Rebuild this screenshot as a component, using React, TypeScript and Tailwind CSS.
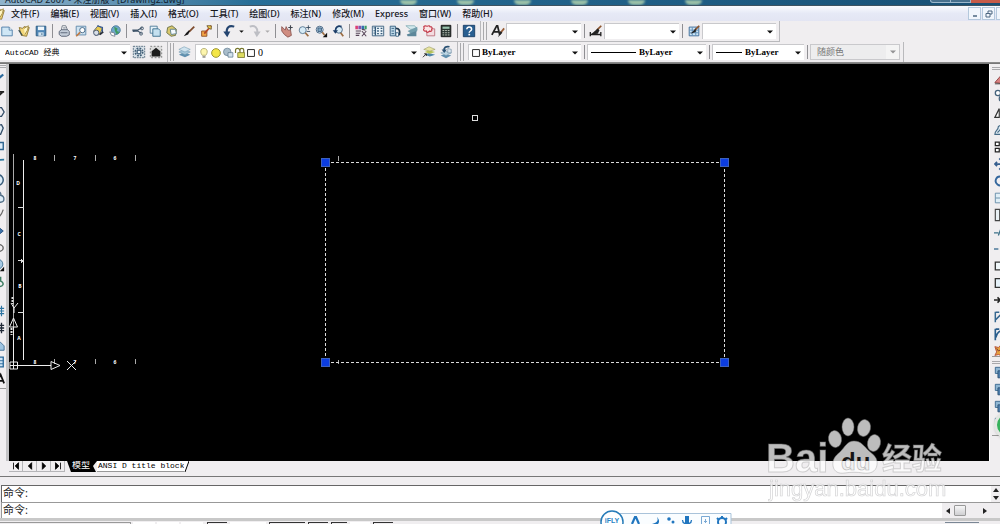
import React from "react";

const icons: Record<string, React.ReactNode> = {
  sheet: (
    <>
      <path d="M2 3.5h8.5L14 7v6.500H2z" fill="#cfe6f5" stroke="#4a7aa5" />
      <path d="M10.500 3.500V7H14" fill="#fff" stroke="#4a7aa5" />
    </>
  ),
  open: (
    <>
      <path d="M2.500 4l4 1 1.500-2 6 1-3 10-6-1z" fill="#f3d77a" stroke="#8b7430" />
      <path d="M8 5l5-3-1 5-3 5" fill="#fff6c5" stroke="#9d8640" />
      <path d="M2 7l4 6" stroke="#3b4e4f" strokeWidth="1.500" />
    </>
  ),
  save: (
    <>
      <path d="M2.500 2.500h11v11h-11z" fill="#4f86b5" stroke="#28587f" />
      <path d="M4.500 3h7v4h-7z" fill="#eef6fb" />
      <path d="M5 9.500h6v4H5z" fill="#d4e4ef" />
      <path d="M9 10.500v2" stroke="#28587f" />
    </>
  ),
  print: (
    <>
      <path d="M5 7l1-5h4l2 5" fill="#fff" stroke="#67707d" />
      <path d="M2.500 8.500L5 6.500h7l2 2v4l-3 1.500H5l-2.500-2z" fill="#c3ccd8" stroke="#525e70" />
      <path d="M4 10h8M7 4.500h3" stroke="#525e70" />
    </>
  ),
  preview: (
    <>
      <path d="M2.500 2.500h11v10h-11z" fill="#cfe3f1" stroke="#5c86a8" />
      <circle cx="9.500" cy="7" r="3" fill="#fff" stroke="#3d6080" />
      <path d="M7 9.500l-4.500 4.500" stroke="#c07a45" strokeWidth="2" />
    </>
  ),
  publish: (
    <>
      <path d="M3 8l5-6 5 3-3 7-5 1z" fill="#e9c94f" stroke="#53627a" />
      <path d="M7 2l6 2v5" fill="none" stroke="#3a5c90" strokeWidth="1.500" />
      <circle cx="6" cy="10" r="3" fill="#d9dfe8" stroke="#40506a" />
      <path d="M10 12l4-3" stroke="#292f3b" strokeWidth="2" />
    </>
  ),
  globe: (
    <>
      <circle cx="9" cy="7" r="5" fill="#6fa8c9" stroke="#48779a" />
      <path d="M7 3l4 2-1 3 3 1-3 3-2-4z" fill="#3e9a5e" />
      <path d="M2 9l5 1 1 4-4-1z" fill="#fff" stroke="#738090" />
    </>
  ),
  cut: (
    <>
      <path d="M1.500 7h6L13 4M2 8.500l6-.5 4 3" fill="none" stroke="#3e5368" strokeWidth="1.300" />
      <circle cx="12.500" cy="5" r="1.700" fill="none" stroke="#3e5368" />
      <circle cx="11.500" cy="11" r="1.700" fill="none" stroke="#3e5368" />
    </>
  ),
  copy: (
    <>
      <path d="M2.500 2.500h8v8h-8z" fill="#e5f2f9" stroke="#4a7896" />
      <path d="M5.500 5.500h6.500l2 2v6.500H5.500z" fill="#c4e0ef" stroke="#356989" />
    </>
  ),
  paste: (
    <>
      <path d="M3 4l5-2 5 4-1 7-5 1-5-4z" fill="#dac86c" stroke="#656d43" />
      <path d="M6 6h6l1 5-6 1z" fill="#f5fbff" stroke="#577b8d" />
    </>
  ),
  brush: (
    <>
      <path d="M14 3l-6 6" stroke="#7e4b2e" strokeWidth="2" />
      <path d="M9 8l-2 4-5 2 3-4 3-3z" fill="#171717" />
    </>
  ),
  match: (
    <>
      <path d="M3 8h6v6H3z" fill="#f3a645" stroke="#8d4e26" />
      <path d="M14 2L6 11" stroke="#b24727" strokeWidth="2" />
      <path d="M9 2h5v4l-3-1z" fill="#f2cf49" stroke="#6c5331" />
    </>
  ),
  undo: (
    <>
      <path d="M14 3C8 1 4.500 4 5.500 11" fill="none" stroke="#24446f" strokeWidth="2.400" />
      <path d="M1.500 8.500h8L6 15z" fill="#24446f" />
    </>
  ),
  redo: (
    <>
      <path d="M2 3c6-2 9.500 1 8.500 8" fill="none" stroke="#bdbec4" strokeWidth="2.200" />
      <path d="M6.500 8.500h8L10 15z" fill="#bdbec4" />
    </>
  ),
  pan: (
    <>
      <path d="M2 3l4 4 1-4 2 4 3 0 1 6-4 2-4-3-3-4z" fill="#d08d81" stroke="#8a5550" />
      <path d="M12 1.500v5M9.500 4h5" stroke="#41464f" strokeWidth="1.300" />
    </>
  ),
  zoomRt: (
    <>
      <circle cx="6.500" cy="7" r="4" fill="#d7ebf6" stroke="#53748f" />
      <path d="M9.500 10l3.500 4" stroke="#9b6c42" strokeWidth="2" />
      <path d="M13 1.500v5M10.500 4h5M11 8.500h4" stroke="#34485c" />
    </>
  ),
  zoomWin: (
    <>
      <circle cx="6.500" cy="6.500" r="4" fill="#d7ebf6" stroke="#405f7e" />
      <path d="M4.500 4.500h4v4h-4z" fill="#7fa8c5" stroke="#385777" />
      <path d="M9.500 9.500l2.500 3" stroke="#9b6c42" strokeWidth="2" />
      <path d="M15 10v5h-5z" fill="#111" />
    </>
  ),
  zoomPrev: (
    <>
      <circle cx="9" cy="6.500" r="4" fill="#d7ebf6" stroke="#405f7e" />
      <path d="M11 10l3 4" stroke="#9b6c42" strokeWidth="2" />
      <path d="M12 3C8 1 5 4 5 8" fill="none" stroke="#1d3e69" strokeWidth="2" />
      <path d="M2 7h6l-3 4z" fill="#1d3e69" />
    </>
  ),
  props: (
    <>
      <path d="M1.500 2h3v4h-3z" fill="#db3f76" />
      <path d="M5 2h3v4H5z" fill="#8750ad" />
      <path d="M8.500 2h3v4h-3z" fill="#346fae" />
      <path d="M12 2h2.500v4H12z" fill="#3c9d69" />
      <path d="M2 8h6M2 10.500h5M2 13h4M9 8l5 6M14 8l-5 6M9 6l4 1" stroke="#564457" strokeWidth="1.200" />
    </>
  ),
  design: (
    <>
      <path d="M1.500 2.500h13v11h-13z" fill="#e8f1f7" stroke="#355a7a" />
      <path d="M5 3v10M3 4.500h1M3 7.500h1M3 10.500h1M7 5h2M11 5h2M7 8h2M11 8h2M7 11h2M11 11h2" stroke="#355a7a" strokeWidth="1.500" />
    </>
  ),
  palette: (
    <>
      <path d="M2.500 2.500h6v11h-6z" fill="#bed8e9" stroke="#315c7d" />
      <path d="M4 5h3M4 8h3M4 11h3" stroke="#315c7d" />
      <path d="M9 5c4 0 5 3 4 8" stroke="#213a50" strokeWidth="2" fill="none" />
      <path d="M9 10h3v4H9z" fill="#fff" stroke="#315c7d" />
    </>
  ),
  sheets: (
    <>
      <path d="M1 2h10l3 4H6z" fill="#d2e9ed" stroke="#8cb1b9" />
      <path d="M3 8l11-5v5l-6 4z" fill="#729eac" />
      <path d="M2 12l11-4v6H3z" fill="#5d879a" />
    </>
  ),
  markup: (
    <>
      <path d="M5.500 5.500h9v8h-9z" fill="#f4dce0" stroke="#bc6e79" />
      <path d="M2 3c2-2 3 0 4-.5s3-1 3 .5c3 0 3 2 2 3 1 2-1 3-2 2-2 2-4 2-4 0-3 1-4-2-2.500-3z" fill="#fbe5e6" stroke="#c33948" strokeWidth="1.300" />
    </>
  ),
  calc: (
    <>
      <path d="M2.500 1.500h11v13h-11z" fill="#26332f" stroke="#111" />
      <path d="M4 3h8v2.500H4z" fill="#99c3ae" />
      <path d="M4 7.500h8M4 10h8M4 12.500h8" stroke="#d4d8ce" strokeDasharray="2 1" />
    </>
  ),
  help: (
    <>
      <path d="M1.500 1.500h13v13h-13z" fill="#295f91" stroke="#153a62" />
      <path d="M5.500 6c0-3.500 5.500-3 5.500 0 0 2-2.800 2-2.800 4" fill="none" stroke="#fff" strokeWidth="1.700" />
      <path d="M7.300 11.200h2v1.800h-2z" fill="#fff" />
    </>
  ),
  textStyle: (
    <>
      <path d="M1 12.500L6.500 2h1l2.500 10.500M3.500 9h6" fill="none" stroke="#222" strokeWidth="2" />
      <path d="M15 5l-4 5" stroke="#985c35" strokeWidth="2" />
      <path d="M11 8l2 2-5 5z" fill="#222" />
    </>
  ),
  dimStyle: (
    <>
      <path d="M1 12h13M1.500 9v5M13.500 9v5" stroke="#222" strokeWidth="1.500" />
      <path d="M14 2L9 7" stroke="#8d552f" strokeWidth="2" />
      <path d="M10 5L2 12l8-1 2-4z" fill="#222" />
    </>
  ),
  tableStyle: (
    <>
      <path d="M2.500 3.500h11v10h-11z" fill="#cde5f5" stroke="#326392" />
      <path d="M3 7h10M3 10h10M6 4v9M10 4v9" stroke="#5788b3" />
      <path d="M14 2L9 7" stroke="#8d552f" strokeWidth="2" />
      <path d="M10 5L4 11l6-2z" fill="#222" />
    </>
  ),
  gear: (
    <>
      <path d="M1.500 1.500h13v13h-13z" fill="#d7e0e7" stroke="#4e6578" strokeDasharray="2 1" />
      <circle cx="8" cy="8" r="4.200" fill="none" stroke="#405e77" strokeWidth="2" strokeDasharray="2 1.300" />
      <circle cx="8" cy="8" r="2.200" fill="#eef5fa" stroke="#405e77" strokeWidth="1.300" />
    </>
  ),
  home: (
    <>
      <path d="M1.500 1.500h13v13h-13z" fill="#ddd" stroke="#777" strokeDasharray="2 2" />
      <path d="M3 7l5-4 5 4v6H3z" fill="#1d1d1d" />
    </>
  ),
  layers: (
    <>
      <path d="M1 11l6-3 7 3-6 3z" fill="#608fae" />
      <path d="M1 8l6-3 7 3-6 3z" fill="#a4c5d8" stroke="#6994ad" strokeWidth=".6" />
      <path d="M1 5l6-3 7 3-6 3z" fill="#d0e3ee" stroke="#6994ad" strokeWidth=".6" />
    </>
  ),
  layerCur: (
    <>
      <path d="M3 11l5-2 7 2-6 2z" fill="#4f86a8" />
      <path d="M3 8l5-2 7 2-6 2z" fill="#b6c457" />
      <path d="M2 5l6-3 7 3-6 2z" fill="#e8e4a1" stroke="#8d9056" strokeWidth=".6" />
      <path d="M1 14l4-4M2.500 10H5v2.500" stroke="#222" fill="none" />
    </>
  ),
  layerPrev: (
    <>
      <path d="M2 12l5-2 7 2-6 3z" fill="#608fae" />
      <path d="M2 9l5-2 7 2-6 3z" fill="#bcd5e3" stroke="#6994ad" strokeWidth=".6" />
      <path d="M12 2C8 1 5 3 6 7" stroke="#2b5274" strokeWidth="2" fill="none" />
      <path d="M3 5h6l-3 4z" fill="#2b5274" />
      <path d="M10 4l4 1v4h-4z" fill="#d8e6ef" stroke="#54758d" strokeWidth=".6" />
    </>
  ),
  bulb: (
    <>
      <path d="M5.500 11C3 8 2.500 2 8 2s5 6 2.500 9z" fill="#fdf6ae" stroke="#a49d5d" />
      <path d="M6 12h4v2.500H6z" fill="#9e9e98" />
    </>
  ),
  sun: <circle cx="8" cy="8" r="5.800" fill="#f4e647" stroke="#9a9332" strokeWidth="1.300" />,
  sunFrame: (
    <>
      <circle cx="7" cy="6.500" r="5" fill="#a9bdcb" stroke="#667f92" />
      <path d="M8 7.500h6.500v6H8z" fill="#d4e3ed" stroke="#5e798e" />
    </>
  ),
  lock: (
    <>
      <path d="M2 8V4.500C2 1 7.500 1 7.500 4.500M8 8V4c0-3 5-3 5 0v4" fill="none" stroke="#76762c" strokeWidth="1.600" />
      <path d="M5 7.500h9v6.500H5z" fill="#dddc61" stroke="#73732b" />
    </>
  ),
  swatch: <path d="M2.500 2.500h11v11h-11z" fill="#fff" stroke="#222" strokeWidth="1.500" />,
  line: <path d="M2 14L14 4" stroke="#2b6a9c" strokeWidth="2.500" />,
  ray: <path d="M3 14L13 5M10 4.500h5" stroke="#222" strokeWidth="2" />,
  poly: <path d="M4 3h8l3 5-3 5H4" fill="none" stroke="#36506a" strokeWidth="1.500" />,
  pentagon: <path d="M3 4l9-1 2 4-3 7H4z" fill="#e3eef5" stroke="#36506a" strokeWidth="1.500" />,
  rect: <path d="M2 4h12v8H2z" fill="#dfeefa" stroke="#2e658f" strokeWidth="1.600" />,
  arc: <path d="M2 13C4 5 8 4 15 4" fill="none" stroke="#2e789e" strokeWidth="2" />,
  circle: <circle cx="8" cy="8" r="6" fill="#deedf8" stroke="#375c7a" strokeWidth="1.700" />,
  cloud: <path d="M4 2c5-2 8 1 7 4 5 1 5 8 0 8H3" fill="#deedf8" stroke="#526f87" strokeWidth="1.500" />,
  spline: <path d="M2 3c2 10 8 12 12 0" fill="none" stroke="#666" strokeWidth="1.500" />,
  diamond: <path d="M8 3l6 5-6 5z" fill="#3f75aa" stroke="#234b7d" />,
  ring: <ellipse cx="8" cy="8" rx="6" ry="4" fill="none" stroke="#666" strokeWidth="1.500" />,
  block: (
    <>
      <circle cx="8" cy="7" r="5.500" fill="#a7cbe5" stroke="#3f7091" />
      <path d="M15 10v5h-5z" fill="#111" />
    </>
  ),
  point: <path d="M11 2v5c5 2 3 7-3 6" fill="none" stroke="#3d7d62" strokeWidth="1.700" />,
  hatch: <path d="M2 5h13M2 8h13M2 11h13M8 2v12M12 2v12" stroke="#2d75a2" strokeWidth="1.300" />,
  hatchDark: <path d="M2 5h13M2 8h13M2 11h13M8 2v12M12 2v12" stroke="#222b38" strokeWidth="1.500" />,
  region: <path d="M3 4h7l5 5v5H3z" fill="#9fc5e2" stroke="#3b6c92" />,
  table: (
    <>
      <path d="M2 2.500h12v11H2z" fill="#cfe4f5" stroke="#28689a" strokeWidth="1.500" />
      <path d="M3 6.500h11M3 10h11" stroke="#28689a" />
    </>
  ),
  mtext: <path d="M6 13l5-10 4 10M8 10h6" fill="none" stroke="#111" strokeWidth="2" />,
  erase: (
    <>
      <path d="M1 12l7-8 6 3-6 6z" fill="#d98080" stroke="#8b4040" />
      <path d="M1 13.500h12" stroke="#333" />
    </>
  ),
  copyObj: (
    <>
      <circle cx="4.500" cy="4.500" r="3" fill="#fff" stroke="#45627c" strokeWidth="1.500" />
      <circle cx="9" cy="11" r="3" fill="#d2e4ef" stroke="#45627c" strokeWidth="1.500" />
    </>
  ),
  mirror: (
    <>
      <path d="M1 13L6 3v10z" fill="#fff" stroke="#333" strokeWidth="1.300" />
      <path d="M8 3l6 10H8z" fill="#487aa6" />
    </>
  ),
  offset: <path d="M1 13c0-5 4-4 4-9 4-3 8 0 8 4v5zM4 11c2-3 3-2 4-5" fill="#dfebf2" stroke="#456a86" strokeWidth="1.300" />,
  array: <path d="M1.500 2.500h4.500v4H1.500zM8.500 2.500H13v4H8.500zM1.500 9.500h4.500v4H1.500zM8.500 9.500H13v4H8.500z" fill="#fff" stroke="#222" strokeWidth="1.400" />,
  move: <path d="M8 1v14M1 8h14M6 3l2-2 2 2M6 13l2 2 2-2M3.500 5.500L1 8l2.500 2.500" fill="none" stroke="#365f8f" strokeWidth="2" />,
  rotate: <path d="M8 3C2 2 0 9 4 12c4 3 9 0 9-4M8 1v5" fill="none" stroke="#34679d" strokeWidth="2.200" />,
  scale: <path d="M1.500 2.500h13v11h-13zM2 8h12" fill="#e1eff7" stroke="#5f87a5" />,
  stretch: <path d="M1.500 1.500h5v13h-5zM7 4h7v9" fill="#eaf1f5" stroke="#444" strokeWidth="1.300" />,
  trim: <path d="M0 9h5M5 12l3-8M9 7h6" stroke="#3c7188" strokeWidth="1.500" />,
  extend: <path d="M0 8h5M7 8h8" stroke="#4e7b9a" strokeWidth="1.700" />,
  breakPt: <path d="M1.500 3.500h13v9h-13z" fill="#f0f7fa" stroke="#333" strokeWidth="1.500" />,
  breakObj: <path d="M7 3H1.500v10h13V3H11" fill="#e6f2fa" stroke="#333" strokeWidth="1.500" />,
  join: <path d="M0 8h6M4 5l3 3-3 3M15 8H9" fill="none" stroke="#222" strokeWidth="1.700" />,
  chamfer: <path d="M1.500 2v12M2 2.500h4M2 11l8-8h5" fill="none" stroke="#356790" strokeWidth="1.700" />,
  fillet: <path d="M1.500 2v13M2 2.500h4M2 12C3 6 8 3 15 2.500" fill="none" stroke="#285c8b" strokeWidth="1.900" />,
  explode: (
    <>
      <path d="M1 3l4 1 2-2 1 4 5 1-4 3 1 4-5-2-4 1 2-4z" fill="#e6a140" stroke="#b34a35" />
      <path d="M3 5l2 3 4-2" fill="none" stroke="#733" />
    </>
  ),
  order: (
    <>
      <path d="M1.500 1.500h9v7h-9z" fill="#8fb6d3" stroke="#36658d" />
      <path d="M4.500 5.500h10v8h-10z" fill="#517fac" stroke="#2c5276" />
    </>
  ),
  caret: <path d="M4 6h8l-4 4z" fill="#111" />,
};

function Icon({ name, className = "size-[14px]" }: { name: string; className?: string }) {
  return (
    <svg viewBox="0 0 16 16" className={`shrink-0 ${className}`} fill="none" aria-hidden="true">
      {icons[name]}
    </svg>
  );
}

function Tool({ name }: { name: string }) {
  return (
    <button type="button" aria-label={name} className="flex h-[17px] w-[17px] shrink-0 items-center justify-center">
      <Icon name={name} />
    </button>
  );
}

function Sep() {
  return (
    <div className="flex w-[6px] shrink-0 justify-center">
      <div className="h-[14px] w-px bg-[#8f8f93]" />
    </div>
  );
}

function Grip() {
  return (
    <div className="flex shrink-0 gap-[2px] px-[2px]">
      <div className="h-[18px] w-px bg-[#a9a9ac]" />
      <div className="h-[18px] w-px bg-[#a9a9ac]" />
    </div>
  );
}

function Combo({ label, value, className, textClass = "pl-1", disabled = false, children }: {
  label: string;
  value: string;
  className: string;
  textClass?: string;
  disabled?: boolean;
  children?: React.ReactNode;
}) {
  return (
    <div className={`relative flex h-[16px] shrink-0 items-center border-t border-l border-[#c9c9cc] ${disabled ? "border bg-[#ededee] text-[#777]" : "bg-white text-black"} ${className}`}>
      {children}
      <select
        aria-label={label}
        disabled={disabled}
        className={`h-full min-w-0 flex-1 appearance-none bg-transparent outline-none ${textClass}`}
      >
        <option>{value}</option>
      </select>
      <div className={`pointer-events-none absolute top-0 right-0 flex h-full w-[13px] items-center justify-center bg-white ${disabled ? "opacity-40" : ""}`}>
        <Icon name="caret" className="size-[12px]" />
      </div>
    </div>
  );
}

const serif = "font-['Liberation_Serif','Noto_Sans_CJK_SC',serif] text-[9px] font-bold";
const menus = ["文件(F)", "编辑(E)", "视图(V)", "插入(I)", "格式(O)", "工具(T)", "绘图(D)", "标注(N)", "修改(M)", "Express", "窗口(W)", "帮助(H)"];
const groups = [
  ["sheet", "open", "save"],
  ["print", "preview", "publish", "globe"],
  ["cut", "copy", "paste", "brush", "match"],
];
const groupsAfterUndo = [
  ["pan", "zoomRt", "zoomWin", "zoomPrev"],
  ["props", "design", "palette", "sheets", "markup", "calc"],
  ["help"],
];
const drawTools = ["line", "ray", "poly", "pentagon", "rect", "arc", "circle", "cloud", "spline", "diamond", "ring", "block", "point"];
const drawTools2 = ["hatch", "hatchDark", "region", "table", "mtext"];
const modifyTools = ["erase", "copyObj", "mirror", "offset", "array", "move", "rotate", "scale", "stretch", "trim", "extend", "breakPt", "breakObj", "join", "chamfer", "fillet", "explode"];

function TitleBar() {
  return (
    <header className="flex h-[6px] shrink-0 items-end overflow-hidden border-b border-[#3e5361] bg-linear-to-r from-[#8fb4cc] via-[#286f98] via-25% to-[#185075]">
      <h1 className="w-[400px] shrink-0 pl-[5px] text-[9px] leading-[11px] whitespace-nowrap text-[#10202c]">
        AutoCAD 2007 - 未注册版 - [Drawing2.dwg]
      </h1>
      <div className="flex h-full flex-1 gap-[40px]">
        {[0, 1, 2, 3, 4, 5].map((n) => (
          <div key={n} className="h-full w-[17px] rounded-b-full bg-[#b9d9b0] opacity-80 blur-[1px]" />
        ))}
      </div>
      <div className="flex h-[3px] shrink-0 self-start">
        <button type="button" aria-label="最小化" className="h-full w-[21px] rounded-bl border border-t-0 border-[#9db8cc] bg-[#47708d]" />
        <button type="button" aria-label="还原" className="h-full w-[20px] border-r border-b border-[#9db8cc] bg-[#47708d]" />
        <button type="button" aria-label="关闭" className="h-full w-[29px] bg-[#c65b48]" />
      </div>
    </header>
  );
}

function MenuBar() {
  return (
    <nav className="flex h-[15px] shrink-0 items-center bg-linear-to-b from-[#fafbfe] via-[#e6e9f6] to-[#e3e5f3] text-[9px] leading-[14px] font-medium text-[#16161c]">
      <Icon name="open" className="-ml-[8px] size-[14px]" />
      <div className="flex flex-1 gap-[11px] pl-[5px]">
        {menus.map((m) => (
          <button key={m} type="button" className="whitespace-nowrap">{m}</button>
        ))}
      </div>
      <div className="flex gap-px text-[#4d6781]">
        <button type="button" aria-label="最小化窗口" className="flex size-[13px] items-center justify-center border border-[#b4c8dc] bg-[#f1f6fc]">
          <svg viewBox="0 0 8 8" className="size-[8px]"><path d="M2 6h4" stroke="currentColor" strokeWidth="1.500" /></svg>
        </button>
        <button type="button" aria-label="还原窗口" className="flex size-[13px] items-center justify-center border border-[#b4c8dc] bg-[#f1f6fc]">
          <svg viewBox="0 0 8 8" className="size-[8px]" fill="none"><path d="M3 3V1h4v3H5M1 3.500h4V7H1z" stroke="currentColor" /></svg>
        </button>
        <button type="button" aria-label="关闭窗口" className="h-[13px] w-[4px] border border-r-0 border-[#b4c8dc] bg-[#f1f6fc]" />
      </div>
    </nav>
  );
}

function ToolGroups({ items }: { items: string[][] }) {
  return (
    <>
      {items.map((g) => (
        <React.Fragment key={g[0]}>
          {g.map((n) => <Tool key={n} name={n} />)}
          {g[0] !== "help" && <Sep />}
        </React.Fragment>
      ))}
    </>
  );
}

function StandardBar() {
  return (
    <div className="flex h-[21px] shrink-0 items-center overflow-hidden">
      <div className="-ml-[2px] flex h-full shrink-0 items-center border-r border-b border-[#b9b9bc] pr-[3px]">
        <ToolGroups items={groups} />
        <Tool name="undo" />
        <Icon name="caret" className="size-[9px]" />
        <Tool name="redo" />
        <Icon name="caret" className="size-[9px] opacity-30" />
        <Sep />
        <ToolGroups items={groupsAfterUndo} />
      </div>
      <div className="flex h-full shrink-0 items-center border-r border-b border-[#b9b9bc] pr-[3px]">
        <Grip />
        <Tool name="textStyle" />
        <Combo label="文字样式" value="" className="w-[75px]" />
        <Sep />
        <Tool name="dimStyle" />
        <Combo label="标注样式" value="" className="w-[75px]" />
        <Sep />
        <Tool name="tableStyle" />
        <Combo label="表格样式" value="" className="w-[74px]" />
      </div>
    </div>
  );
}

function LayerBar() {
  return (
    <div className="flex h-[21px] shrink-0 items-center overflow-hidden border-b border-[#8a8a8a]">
      <div className="flex h-full shrink-0 items-center border-r border-[#b9b9bc] pr-[3px]">
        <Combo label="工作空间" value="AutoCAD 经典" className="w-[130px] border-l-0" textClass="pl-[5px] font-['Liberation_Mono','Noto_Sans_CJK_SC',monospace] text-[8px]" />
        <Tool name="gear" />
        <Tool name="home" />
      </div>
      <div className="flex h-full shrink-0 items-center border-r border-[#b9b9bc] pr-[3px]">
        <Grip />
        <Tool name="layers" />
        <Combo label="图层" value="0" className="ml-[2px] w-[225px]" textClass="pl-[2px] font-['Liberation_Serif',serif] text-[10px]">
          <div className="flex items-center pl-[2px]">
            <Icon name="bulb" className="size-[12px]" />
            <Icon name="sun" className="size-[12px]" />
            <Icon name="sunFrame" className="size-[12px]" />
            <Icon name="lock" className="size-[12px]" />
            <Icon name="swatch" className="size-[10px]" />
          </div>
        </Combo>
        <Tool name="layerCur" />
        <Tool name="layerPrev" />
      </div>
      <div className="flex h-full shrink-0 items-center border-r border-[#b9b9bc] pr-[3px]">
        <Grip />
        <Combo label="颜色" value="ByLayer" className={`ml-[2px] w-[113px] ${serif}`} textClass="pl-[1px]">
          <Icon name="swatch" className="ml-[2px] size-[10px]" />
        </Combo>
        <Sep />
        <Combo label="线型" value="ByLayer" className={`w-[119px] ${serif}`} textClass="pl-[3px]">
          <div className="ml-[3px] h-px w-[45px] bg-black" />
        </Combo>
        <Sep />
        <Combo label="线宽" value="ByLayer" className={`w-[92px] ${serif}`} textClass="pl-[3px]">
          <div className="ml-[3px] h-px w-[26px] bg-black" />
        </Combo>
        <Sep />
        <Combo label="打印样式" value="随颜色" disabled className="w-[90px] text-[9px]" textClass="pl-[6px]" />
      </div>
    </div>
  );
}

function Mark({ x, y, children }: { x: number; y: number; children: string }) {
  return (
    <text x={x} y={y} fontSize="5" textAnchor="middle" fill="#fff" fontWeight="bold">{children}</text>
  );
}

function Canvas() {
  const grips = [[325, 162], [724, 162], [325, 362], [724, 362]];
  return (
    <main className="min-w-0 flex-1 overflow-hidden bg-black">
      <svg className="block h-full w-full" fill="none" shapeRendering="crispEdges">
        <g transform="translate(-9 -64)">
          <path d="M13.500 154v208" stroke="#aaa" />
          <path d="M23.500 160v200" stroke="#eee" />
          <path d="M54.500 155v6M95.500 155v6M135.500 155v6M54.500 359v5M95.500 359v5M135.500 359v5M338.500 156v5M338.500 360v4" stroke="#aaa" />
          <path d="M18 207.500h6M18 260.500h6M21 258.500v4M22 259.500v2M18 312.500h6" stroke="#ddd" />
          <Mark x={35} y={160}>8</Mark>
          <Mark x={75} y={160}>7</Mark>
          <Mark x={115} y={160}>6</Mark>
          <Mark x={35} y={364}>8</Mark>
          <Mark x={75} y={364}>7</Mark>
          <Mark x={115} y={364}>6</Mark>
          <Mark x={18} y={185}>D</Mark>
          <Mark x={19} y={236}>C</Mark>
          <Mark x={20} y={288}>B</Mark>
          <Mark x={19} y={340}>A</Mark>
          <g stroke="#eee" shapeRendering="auto">
            <path d="M13.500 362v-35M17 365.500h34M10 362h7.500v7h-7.500zM10 365.500h7M13.500 362v7" />
            <path d="M13.500 318l-4 9h8zM51 361.500v8l9-4z" />
            <path d="M67 361l9 9M76 361l-9 9M11 303l3 5 4-5M14 308v5" />
            <path d="M12.500 297v7M11.500 328v7" stroke="#ddd" strokeWidth="2" strokeDasharray="2 1" />
          </g>
          <path d="M325.500 162.500h399v200h-399z" stroke="#ddd" strokeDasharray="3 2" />
          {grips.map(([x, y]) => (
            <rect key={`${x}-${y}`} x={x - 3.5} y={y - 3.5} width="8" height="8" fill="#0c3de0" stroke="#3c61bd" />
          ))}
          <path d="M472.500 115.500h5v5h-5z" stroke="#ddd" />
        </g>
      </svg>
    </main>
  );
}

function LeftTools() {
  return (
    <aside className="w-[9px] shrink-0 overflow-hidden border-r-[3px] border-[#c4c4c6]">
      <div className="-ml-[11px] flex w-[17px] flex-col border-b border-[#9a9a9a] pb-px">
        <div className="my-[1px] h-[3px] border-y border-[#a9a9ac]" />
        {drawTools.map((n) => <Tool key={n} name={n} />)}
        <div className="h-[12px]" />
        {drawTools2.map((n) => <Tool key={n} name={n} />)}
      </div>
    </aside>
  );
}

function RightTools() {
  return (
    <aside className="w-[11px] shrink-0 overflow-hidden border-l border-white pl-[2px]">
      <div className="mt-[3px] h-[3px] w-[17px] border-y border-[#a9a9ac]" />
      <div className="flex h-[283px] w-[17px] flex-col justify-between">
        {modifyTools.map((n) => <Tool key={n} name={n} />)}
      </div>
      <div className="mt-[3px] mb-[4px] h-px bg-[#999]" />
      <div className="h-[3px] w-[17px] border-y border-[#a9a9ac]" />
      <div className="flex w-[17px] flex-col border-b border-[#999] pb-[3px]">
        {[0, 1, 2, 3].map((n) => <Tool key={n} name="order" />)}
      </div>
    </aside>
  );
}

const navPaths = [
  ["首页", "M3 2v8M9 2L5 6l4 4z"],
  ["上一页", "M8 2L4 6l4 4z"],
  ["下一页", "M4 2l4 4-4 4z"],
  ["末页", "M9 2v8M3 2l4 4-4 4z"],
];

function SheetTabs() {
  return (
    <div className="flex h-[11px] shrink-0 items-stretch pl-[9px]">
      {navPaths.map(([label, d]) => (
        <button key={label} type="button" aria-label={label} className="flex w-[14px] items-center justify-center border-r border-b border-[#b5b5b8]">
          <svg viewBox="0 0 12 12" className="size-[10px]"><path d={d} fill="#000" stroke="#000" /></svg>
        </button>
      ))}
      <div className="flex font-['Liberation_Mono','Noto_Sans_CJK_SC',monospace]">
        <button type="button" className="ml-[2px] flex text-[9px] leading-[11px] text-white">
          <svg viewBox="0 0 4 11" className="h-[11px] w-[4px]"><path d="M0 0h4v11z" fill="#000" /></svg>
          <span className="bg-black px-[1px]">模型</span>
          <svg viewBox="0 0 6 11" className="h-[11px] w-[6px]"><path d="M0 0h6L2 5l3 6H0z" fill="#000" /></svg>
        </button>
        <button type="button" className="flex text-[8px] leading-[10px] text-black">
          <span className="border-b border-[#999] bg-white pl-px whitespace-pre">ANSI D title block</span>
          <svg viewBox="0 0 5 11" className="h-[11px] w-[5px]"><path d="M0 0h5L1 11H0z" fill="#fff" /><path d="M5 0L1 11" stroke="#000" /></svg>
        </button>
      </div>
    </div>
  );
}

function CommandPanel() {
  return (
    <section className="mt-[4px] shrink-0 border-t border-[#777] pt-[8px] text-[11px] leading-[13px] text-[#222]">
      <div className="ml-px flex h-[17px] border-t border-l border-[#666] bg-white">
        <p className="flex-1 pl-[1px]">命令:</p>
        <div className="flex w-[9px] flex-col items-center justify-between bg-[#f0eef0] py-[2px]">
          <svg viewBox="0 0 6 4" className="h-[4px] w-[6px]"><path d="M3 0l3 4H0z" fill="#222" /></svg>
          <svg viewBox="0 0 6 4" className="h-[4px] w-[6px]"><path d="M3 4l3-4H0z" fill="#222" /></svg>
        </div>
      </div>
      <div className="ml-px flex h-[16px] border-t border-l border-[#999] bg-white">
        <label htmlFor="command" className="pl-[1px]">命令:</label>
        <input id="command" className="h-full min-w-0 flex-1 bg-transparent px-1 outline-none" />
        <div className="flex w-[58px] items-center bg-[#f0eef0] pl-[4px]">
          <svg viewBox="0 0 4 6" className="h-[6px] w-[4px]"><path d="M4 0v6L0 3z" fill="#222" /></svg>
          <div className="ml-[4px] h-[11px] w-[12px] rounded-[1px] border border-[#999] bg-linear-to-b from-[#f7f7f7] to-[#cfcfd2]" />
          <svg viewBox="0 0 4 6" className="ml-[17px] h-[6px] w-[4px]"><path d="M0 0v6l4-3z" fill="#222" /></svg>
        </div>
      </div>
    </section>
  );
}

function StatusBar() {
  return (
    <footer className="flex h-[6px] shrink-0 items-end border-t-[3px] border-[#c8c8c8]">
      <div className="h-[2px] w-[131px] border-t border-r border-[#999]" />
      <div className="ml-[2px] h-[2px] w-[22px] bg-white" />
      <div className="ml-[2px] h-[2px] w-[22px] bg-white" />
      <div className="ml-[2px] h-[2px] w-[22px] bg-white" />
      <div className="ml-[4px] h-[2px] w-[20px] border-t border-l border-[#333]" />
      <div className="ml-[3px] h-[2px] w-[36px] bg-white" />
      <div className="ml-[3px] h-[2px] w-[36px] border-t border-l border-[#333]" />
      <div className="ml-[3px] h-[2px] w-[20px] border-t border-l border-[#333]" />
      <div className="ml-[3px] h-[2px] w-[16px] border-t border-l border-[#333]" />
      <div className="ml-[3px] h-[2px] w-[20px] bg-white" />
      <div className="ml-[3px] h-[2px] w-[20px] border-t border-l border-[#333]" />
      <div className="mr-[21px] ml-auto h-[2px] w-[34px] border-t border-[#7a8795]" />
    </footer>
  );
}

function Watermark() {
  return (
    <svg viewBox="0 0 190 90" className="pointer-events-none absolute right-[48px] bottom-[20px] h-[90px] w-[190px]" aria-hidden="true">
      <g fill="#fff" stroke="#8f8f8f" strokeOpacity=".5" strokeWidth="1" opacity=".74">
        <text x="4" y="58" fontSize="40" fontWeight="bold" fontFamily="Liberation Sans, sans-serif">Bai</text>
        <ellipse cx="73" cy="25" rx="6.500" ry="8.500" transform="rotate(-10 73 25)" />
        <ellipse cx="86" cy="13" rx="6" ry="9" />
        <ellipse cx="102" cy="14" rx="6.500" ry="8.500" transform="rotate(12 102 14)" />
        <ellipse cx="112" cy="29" rx="6.500" ry="8.500" transform="rotate(12 112 29)" />
        <path d="M92 27c-7 0-9 6-14 11-5 4-8 8-7 14s6 8 12 7c6-1 12-1 18 0 7 1 13-1 14-8s-3-10-8-14c-5-5-8-10-15-10z" />
        <text x="120" y="55" fontSize="30" fontWeight="bold" fontFamily="Noto Sans CJK SC, sans-serif">经验</text>
      </g>
      <text x="79" y="56" fontSize="24" fontWeight="bold" fill="#f0f0f0" fontFamily="Liberation Sans, sans-serif" stroke="#b5b5b5" strokeWidth=".6">du</text>
      <svg x="0" y="0" width="190" height="47">
        <text x="79" y="56" fontSize="24" fontWeight="bold" fill="#151515" fontFamily="Liberation Sans, sans-serif" aria-hidden="true">du</text>
      </svg>
      <text x="7" y="82" fontSize="22" fill="#fff" stroke="#c9c9cb" strokeWidth=".7" opacity=".8" fontFamily="Liberation Sans, sans-serif">jingyan.baidu.com</text>
    </svg>
  );
}

function InputMethodBar() {
  return (
    <svg viewBox="0 0 134 15" className="absolute bottom-0 left-[599px] h-[15px] w-[134px]" fill="none" aria-hidden="true">
      <path d="M13 4.500h119V16H13z" fill="#fafdff" stroke="#a9c3da" />
      <circle cx="13" cy="13" r="11" fill="#fff" stroke="#267bb8" strokeWidth="1.500" />
      <text x="13" y="14" fontSize="7" fontWeight="bold" textAnchor="middle" fill="#2a86c6" fontFamily="Liberation Sans, sans-serif">iFLY</text>
      <path d="M33 15l3-7h1l3 7" stroke="#2176bf" strokeWidth="2.200" />
      <path d="M58 8c2 4-1 6-5 7h6c2-2 1-5-1-7z" fill="#2176bf" />
      <circle cx="70" cy="10" r="1.800" fill="#2176bf" />
      <circle cx="74" cy="13" r="1.500" fill="#2176bf" />
      <path d="M86 7h4v7h-4z" fill="#2176bf" />
      <path d="M83.500 11c0 5 9 5 9 0" stroke="#2176bf" strokeWidth="1.300" />
      <path d="M102.500 7.500h8V16h-8zM105 12.500h3M106.500 10v4" stroke="#7aa9d4" />
      <circle cx="123" cy="13" r="4" stroke="#2176bf" strokeWidth="2" />
      <path d="M123 7v2M118 9l2 2M128 9l-2 2" stroke="#2176bf" strokeWidth="2" />
    </svg>
  );
}

export default function App() {
  return (
    <div className="relative flex h-screen flex-col overflow-hidden bg-[#f0eef0] font-['Noto_Sans','Noto_Sans_CJK_SC',sans-serif]">
      <TitleBar />
      <MenuBar />
      <StandardBar />
      <LayerBar />
      <div className="h-px shrink-0 bg-[#777]" />
      <div className="relative flex min-h-0 flex-1">
        <LeftTools />
        <Canvas />
        <RightTools />
        <button type="button" aria-label="助手" className="absolute -right-[22px] bottom-[22px] size-[28px] rounded-full border-[3px] border-[#e2e6e2] bg-[#36b15c] shadow" />
      </div>
      <SheetTabs />
      <CommandPanel />
      <StatusBar />
      <Watermark />
      <InputMethodBar />
    </div>
  );
}
